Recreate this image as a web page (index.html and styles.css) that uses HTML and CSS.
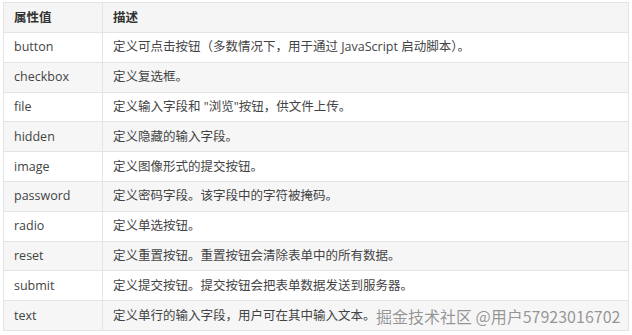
FILE: index.html
```html
<!DOCTYPE html>
<html lang="zh">
<head>
<meta charset="utf-8">
<title>input type</title>
<link rel="stylesheet" href="styles.css">
</head>
<body>
<div class="page">
  <table class="attr-table">
    <thead>
      <tr><th class="col-name">属性值</th><th>描述</th></tr>
    </thead>
    <tbody>
      <tr><td>button</td><td>定义可点击按钮（多数情况下，用于通过 JavaScript 启动脚本）。</td></tr>
      <tr><td>checkbox</td><td>定义复选框。</td></tr>
      <tr><td>file</td><td>定义输入字段和 "浏览"按钮，供文件上传。</td></tr>
      <tr><td>hidden</td><td>定义隐藏的输入字段。</td></tr>
      <tr><td>image</td><td>定义图像形式的提交按钮。</td></tr>
      <tr><td>password</td><td>定义密码字段。该字段中的字符被掩码。</td></tr>
      <tr><td>radio</td><td>定义单选按钮。</td></tr>
      <tr><td>reset</td><td>定义重置按钮。重置按钮会清除表单中的所有数据。</td></tr>
      <tr><td>submit</td><td>定义提交按钮。提交按钮会把表单数据发送到服务器。</td></tr>
      <tr><td>text</td><td>定义单行的输入字段，用户可在其中输入文本。</td></tr>
    </tbody>
  </table>
  <div class="watermark">掘金技术社区 @用户57923016702</div>
</div>
</body>
</html>
```
FILE: styles.css
```css
html, body {
  margin: 0;
  padding: 0;
  background: #fff;
}
.page {
  position: relative;
  width: 632px;
  height: 335px;
  padding: 2px 3px 0 3px;
  box-sizing: border-box;
}
.attr-table {
  width: 626px;
  border-collapse: collapse;
  font-family: "Open Sans", "Noto Sans CJK SC", sans-serif;
  font-size: 12.5px;
  color: #444;
  border: 1px solid #dedede;
}
.attr-table th,
.attr-table td {
  border: 1px solid #e4e4e4;
  padding: 0 10px;
  height: 28.8px;
  text-align: left;
  vertical-align: middle;
  line-height: 18px;
}
.attr-table th {
  background: #f5f5f5;
  font-weight: bold;
  color: #333;
  height: 29px;
}
.attr-table .col-name {
  width: 78px;
}
.attr-table tbody tr:nth-child(even) td {
  background: #f6f6f6;
}
.watermark {
  position: absolute;
  left: 376px;
  top: 306px;
  font-family: "Noto Sans CJK SC", "Noto Sans", sans-serif;
  font-size: 16px;
  line-height: 20px;
  color: rgba(130, 130, 130, 0.85);
  text-shadow: 0 0 1px #fff;
  white-space: nowrap;
}
```
